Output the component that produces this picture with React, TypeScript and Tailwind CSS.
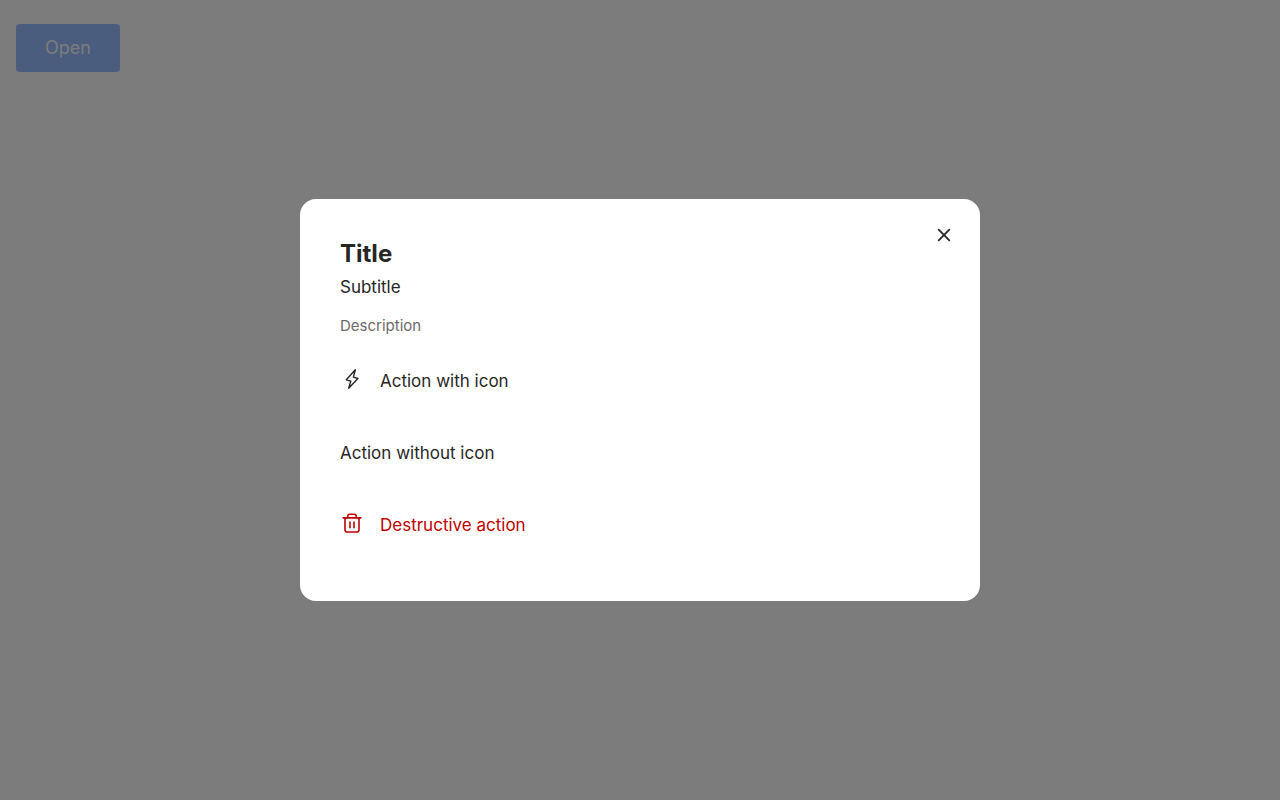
import { useState, type ReactNode } from "react";

type Action = { label: string; icon?: ReactNode; destructive?: boolean };

function BoltIcon() {
  return (
    <svg width="24" height="24" viewBox="0 0 24 24" fill="none" stroke="currentColor" strokeWidth="1.4" strokeLinejoin="round" aria-hidden="true">
      <path d="M15.3 2.8 6.3 12.8 10.8 14.2 8.7 21.3 17.9 11.5 13.4 10.1Z" />
    </svg>
  );
}

function TrashIcon() {
  return (
    <svg width="24" height="24" viewBox="0 0 24 24" fill="none" stroke="currentColor" strokeWidth="1.6" strokeLinecap="round" strokeLinejoin="round" aria-hidden="true">
      <path d="M3.2 6.9h17.6M7.8 6.6V5c0-1.1.8-1.8 1.9-1.8h4.6c1.1 0 1.9.7 1.9 1.8v1.6M5 7.2v11.5c0 1.4.9 2.3 2.3 2.3h9.4c1.4 0 2.3-.9 2.3-2.3V7.2M10 11v5.8M14 11v5.8" />
    </svg>
  );
}

function CloseIcon() {
  return (
    <svg width="24" height="24" viewBox="0 0 24 24" fill="none" stroke="currentColor" strokeWidth="1.8" strokeLinecap="round" aria-hidden="true">
      <path d="M6.7 6.7l10.6 10.6M17.3 6.7l-10.6 10.6" />
    </svg>
  );
}

const actions: Action[] = [
  { label: "Action with icon", icon: <BoltIcon /> },
  { label: "Action without icon" },
  { label: "Destructive action", icon: <TrashIcon />, destructive: true },
];

export default function App() {
  const [open, setOpen] = useState(true);
  const close = () => setOpen(false);

  return (
    <div className="min-h-screen bg-[#f8f8f8] px-4 py-6 font-['Inter','Liberation_Sans',sans-serif] text-[#262626]">
      <button
        type="button"
        onClick={() => setOpen(true)}
        className="h-12 min-w-[104px] rounded bg-[#94baff] px-6 text-[18px] leading-6 text-[#f8f8f8]"
      >
        Open
      </button>

      {open && (
        <div className="fixed inset-0 flex items-center justify-center bg-black/50 p-4">
          <div
            role="dialog"
            aria-modal="true"
            aria-labelledby="sheet-title"
            className="relative w-full max-w-[680px] rounded-2xl bg-white p-10"
          >
            <button
              type="button"
              aria-label="Close"
              onClick={close}
              className="absolute top-4 right-4 flex size-10 items-center justify-center"
            >
              <CloseIcon />
            </button>
            <h2 id="sheet-title" className="text-[24px] leading-[30px] font-bold">Title</h2>
            <p className="mt-1.5 text-[17px] leading-6">Subtitle</p>
            <p className="mt-4 mb-2 text-[15px] leading-[22px] text-[#6b6b6b]">Description</p>
            <ul>
              {actions.map(({ label, icon, destructive }) => (
                <li key={label}>
                  <button
                    type="button"
                    onClick={close}
                    className={`flex h-18 w-full items-center gap-4 text-left text-[17px] leading-6 ${destructive ? "text-[#c00000]" : ""}`}
                  >
                    {icon && <span className="pb-1">{icon}</span>}
                    <span>{label}</span>
                  </button>
                </li>
              ))}
            </ul>
          </div>
        </div>
      )}
    </div>
  );
}
